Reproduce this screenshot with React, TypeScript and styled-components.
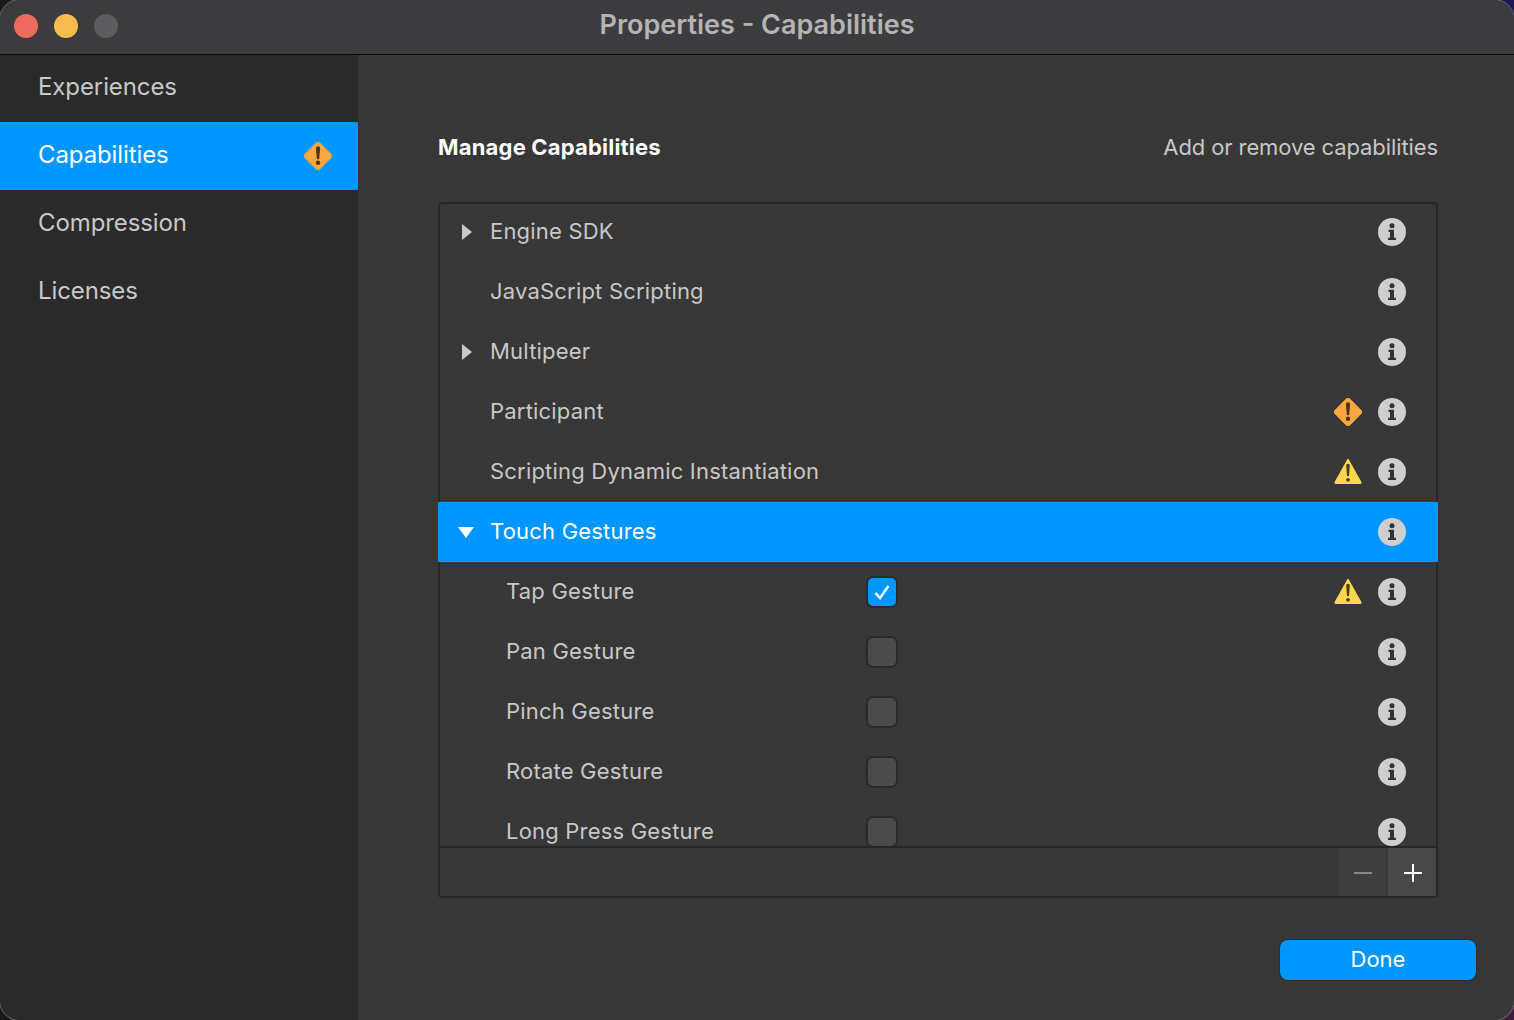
import { createGlobalStyle, styled } from "styled-components";

const GlobalStyle = createGlobalStyle`
  html, body {
    margin: 0;
    padding: 0;
    height: 1020px;
    overflow: hidden;
    background:
      linear-gradient(90deg, #1a1a1a, #1c1a50) top / 100% 50% no-repeat,
      linear-gradient(90deg, #1a1a1a, #3f1a40) bottom / 100% 50% no-repeat;
  }
  * {
    box-sizing: border-box;
  }
`;

const Window = styled.div`
  display: flex;
  flex-direction: column;
  width: 1514px;
  height: 1020px;
  border-radius: 20px;
  box-shadow: 0 0 0 1px #6a6a6a;
  overflow: hidden;
  background-color: #373737;
  font-family: Inter, "Liberation Sans", sans-serif;
  font-size: 22px;
  color: #c8c8c8;
`;

const TitleBar = styled.header`
  position: relative;
  display: flex;
  align-items: center;
  justify-content: center;
  flex: none;
  height: 55px;
  padding-bottom: 5px;
  background-color: #3c3c3e;
  border-bottom: 1px solid #0a0a0a;
`;

const Lights = styled.div`
  position: absolute;
  left: 14px;
  top: 14px;
  display: flex;
  gap: 16px;
`;

const Light = styled.span<{ $color: string }>`
  width: 24px;
  height: 24px;
  border-radius: 50%;
  background-color: ${(p) => p.$color};
`;

const Title = styled.h1`
  margin: 0;
  font-size: 27px;
  font-weight: 600;
  color: #b4b4b4;
`;

const Body = styled.div`
  display: flex;
  flex: 1;
  min-height: 0;
`;

const Sidebar = styled.nav`
  flex: none;
  width: 358px;
  background-color: #2a2a2a;
`;

const NavItem = styled.div<{ $active?: boolean }>`
  display: flex;
  align-items: center;
  justify-content: space-between;
  height: 68px;
  padding: 0 26px 0 38px;
  font-size: 24px;
  letter-spacing: -0.1px;
  color: ${(p) => (p.$active ? "#fff" : "#c8c8c8")};
  background-color: ${(p) => (p.$active ? "#0096ff" : "transparent")};
  &:first-child {
    height: 67px;
  }
`;

const NavLabel = styled.span`
  padding-bottom: 4px;
`;

const Main = styled.main`
  display: flex;
  flex: 1;
  flex-direction: column;
  min-width: 0;
  padding: 78px 76px 40px 80px;
`;

const Header = styled.div`
  display: flex;
  align-items: center;
  justify-content: space-between;
  height: 27px;
  margin-bottom: 42px;
`;

const Heading = styled.h2`
  margin: 0;
  font-size: 22px;
  font-weight: 700;
  letter-spacing: 0.2px;
  color: #fff;
`;

const Hint = styled.span`
  font-size: 22px;
  letter-spacing: -0.1px;
  color: #c8c8c8;
`;

const Panel = styled.section`
  display: flex;
  flex-direction: column;
  height: 696px;
  border: 2px solid #262626;
  border-radius: 4px;
`;

const List = styled.div`
  flex: 1;
  min-height: 0;
  margin-top: -2px;
  overflow-x: visible;
  overflow-y: clip;
`;

const Row = styled.div<{ $selected?: boolean; $child?: boolean }>`
  display: flex;
  align-items: center;
  height: 60px;
  margin: ${(p) => (p.$selected ? "0 -2px" : "0")};
  padding: ${(p) => (p.$selected ? "0 32px 0 20px" : "0 30px 0 18px")};
  padding-left: ${(p) => (p.$child ? "66px" : undefined)};
  letter-spacing: 0.2px;
  color: ${(p) => (p.$selected ? "#fff" : "#c8c8c8")};
  background-color: ${(p) => (p.$selected ? "#0096ff" : "transparent")};
`;

const Caret = styled.span`
  display: flex;
  align-items: center;
  justify-content: center;
  flex: none;
  width: 20px;
  margin-right: 14px;
  margin-left: -2px;
`;

const Label = styled.span<{ $child?: boolean }>`
  flex: none;
  width: ${(p) => (p.$child ? "360px" : "auto")};
  padding-bottom: 2px;
`;

const Checkbox = styled.span<{ $checked?: boolean }>`
  display: flex;
  align-items: center;
  justify-content: center;
  flex: none;
  width: 32px;
  height: 32px;
  border: 2px solid #2a2a2a;
  border-radius: 7px;
  background-color: ${(p) => (p.$checked ? "#0096ff" : "#4a4a4a")};
`;

const Icons = styled.div`
  display: flex;
  align-items: center;
  gap: 16px;
  margin-left: auto;
`;

const Footer = styled.div`
  display: flex;
  justify-content: flex-end;
  flex: none;
  height: 50px;
  border-top: 2px solid #262626;
`;

const ToolButton = styled.div<{ $enabled?: boolean }>`
  display: flex;
  align-items: center;
  justify-content: center;
  width: 48px;
  margin-left: 2px;
  background-color: ${(p) => (p.$enabled ? "#484848" : "#3e3e3e")};
`;

const Actions = styled.div`
  display: flex;
  justify-content: flex-end;
  margin-top: 42px;
  margin-right: -38px;
`;

const DoneButton = styled.button`
  width: 196px;
  height: 40px;
  padding: 0 0 2px;
  border: none;
  border-radius: 8px;
  box-shadow: 0 0 0 1px #2c2c2c;
  font-family: inherit;
  font-size: 22px;
  color: #fff;
  background-color: #0096ff;
`;

function DiamondIcon() {
  return (
    <svg width="28" height="28" viewBox="0 0 28 28">
      <rect x="3.2" y="3.2" width="21.6" height="21.6" rx="3" transform="rotate(45 14 14)" fill="#ffa840" />
      <path d="M11.9 6.4 a2.1 2.1 0 0 1 4.2 0 L15.3 16 a1.3 1.3 0 0 1 -2.6 0 Z" fill="#4a3418" />
      <circle cx="14" cy="20.8" r="2.2" fill="#4a3418" />
    </svg>
  );
}

function TriangleIcon() {
  return (
    <svg width="28" height="28" viewBox="0 0 28 28">
      <path d="M14 1 L27 24.2 Q27.5 25.5 26 25.5 L2 25.5 Q.5 25.5 1 24.2 Z" fill="#ffd84f" stroke="#ffd84f" strokeWidth="1" strokeLinejoin="round" />
      <path d="M12.2 7.6 a1.8 1.8 0 0 1 3.6 0 L15.1 17.2 a1.1 1.1 0 0 1 -2.2 0 Z" fill="#4a3e14" />
      <circle cx="14" cy="21.8" r="1.9" fill="#4a3e14" />
    </svg>
  );
}

function InfoIcon() {
  return (
    <svg width="28" height="28" viewBox="0 0 28 28">
      <circle cx="14" cy="14" r="14" fill="#cfcfcf" />
      <circle cx="14" cy="7.7" r="2.5" fill="#333" />
      <path d="M10.5 11.8 H16 V19.8 H18 V22 H10 V19.8 H12 V14 H10.5 Z" fill="#333" />
    </svg>
  );
}

function CaretRight() {
  return (
    <svg width="12" height="16" viewBox="0 0 12 16">
      <path d="M2 0 L12 8 L2 16 Z" fill="#c8c8c8" />
    </svg>
  );
}

function CaretDown() {
  return (
    <svg width="16" height="11" viewBox="0 0 16 11">
      <path d="M0 0 H16 L8 11 Z" fill="#fff" />
    </svg>
  );
}

const items: {
  name: string;
  caret?: "right" | "down";
  warn?: "diamond" | "triangle";
  selected?: boolean;
  child?: boolean;
  checked?: boolean;
}[] = [
  { name: "Engine SDK", caret: "right" },
  { name: "JavaScript Scripting" },
  { name: "Multipeer", caret: "right" },
  { name: "Participant", warn: "diamond" },
  { name: "Scripting Dynamic Instantiation", warn: "triangle" },
  { name: "Touch Gestures", caret: "down", selected: true },
  { name: "Tap Gesture", child: true, checked: true, warn: "triangle" },
  { name: "Pan Gesture", child: true },
  { name: "Pinch Gesture", child: true },
  { name: "Rotate Gesture", child: true },
  { name: "Long Press Gesture", child: true },
];

export default function App() {
  return (
    <Window>
      <GlobalStyle />
      <TitleBar>
        <Lights>
          <Light $color="#ee6a5f" />
          <Light $color="#f5bd4f" />
          <Light $color="#5d5d5f" />
        </Lights>
        <Title>Properties - Capabilities</Title>
      </TitleBar>
      <Body>
        <Sidebar>
          <NavItem>
            <NavLabel>Experiences</NavLabel>
          </NavItem>
          <NavItem $active>
            <NavLabel>Capabilities</NavLabel>
            <DiamondIcon />
          </NavItem>
          <NavItem>
            <NavLabel>Compression</NavLabel>
          </NavItem>
          <NavItem>
            <NavLabel>Licenses</NavLabel>
          </NavItem>
        </Sidebar>
        <Main>
          <Header>
            <Heading>Manage Capabilities</Heading>
            <Hint>Add or remove capabilities</Hint>
          </Header>
          <Panel>
            <List>
              {items.map((item) => (
                <Row key={item.name} $selected={item.selected} $child={item.child}>
                  {!item.child && (
                    <Caret>
                      {item.caret === "right" && <CaretRight />}
                      {item.caret === "down" && <CaretDown />}
                    </Caret>
                  )}
                  <Label $child={item.child}>{item.name}</Label>
                  {item.child && (
                    <Checkbox $checked={item.checked}>
                      {item.checked && (
                        <svg width="20" height="20" viewBox="0 0 20 20">
                          <path d="M3.5 11 L8 16 L16.5 4" fill="none" stroke="#fff" strokeWidth="2.4" />
                        </svg>
                      )}
                    </Checkbox>
                  )}
                  <Icons>
                    {item.warn === "diamond" && <DiamondIcon />}
                    {item.warn === "triangle" && <TriangleIcon />}
                    <InfoIcon />
                  </Icons>
                </Row>
              ))}
            </List>
            <Footer>
              <ToolButton>
                <svg width="20" height="20" viewBox="0 0 20 20">
                  <path d="M2 11 H20" stroke="#8a8a8a" strokeWidth="2" />
                </svg>
              </ToolButton>
              <ToolButton $enabled>
                <svg width="20" height="20" viewBox="0 0 20 20">
                  <path d="M2 11 H20 M11 2 V20" stroke="#fff" strokeWidth="2" />
                </svg>
              </ToolButton>
            </Footer>
          </Panel>
          <Actions>
            <DoneButton>Done</DoneButton>
          </Actions>
        </Main>
      </Body>
    </Window>
  );
}
